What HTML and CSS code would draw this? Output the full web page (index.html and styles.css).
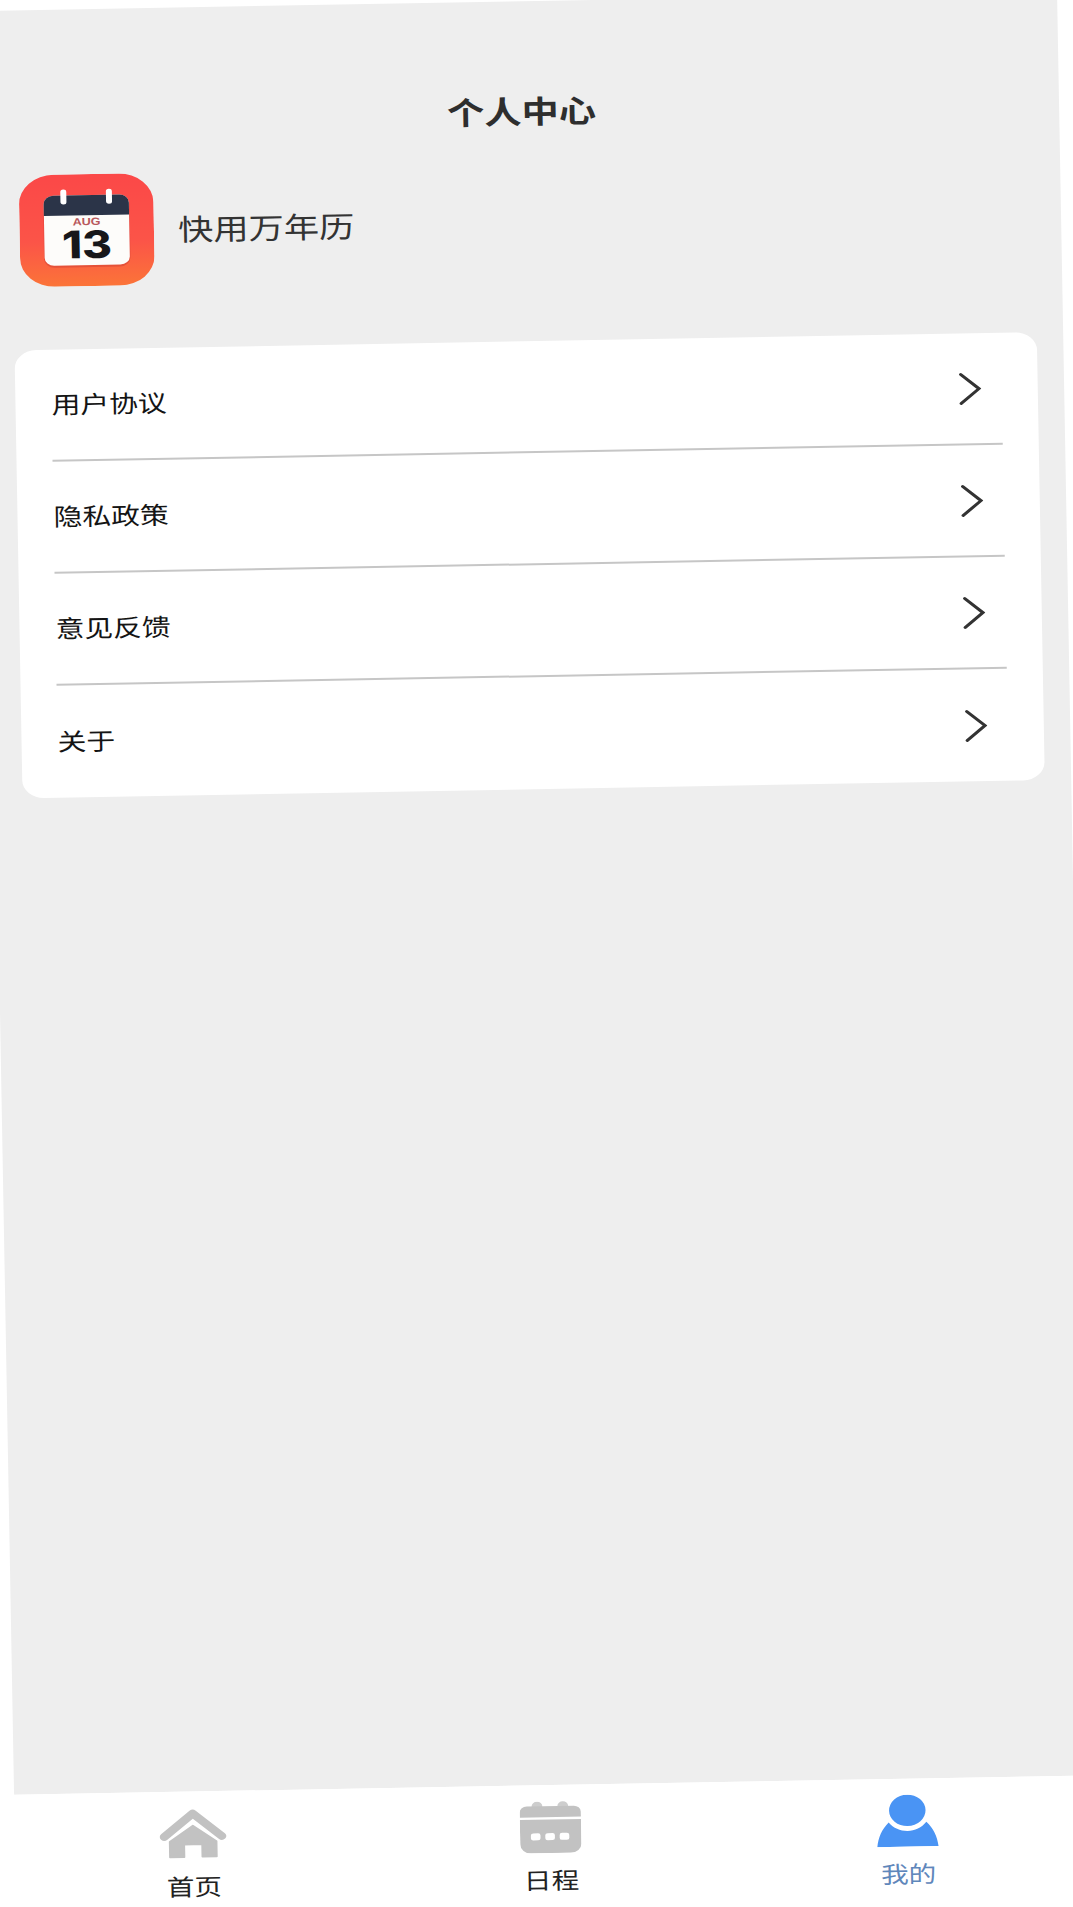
FILE: index.html
```html
<!DOCTYPE html>
<html lang="zh-CN">
<head>
<meta charset="utf-8">
<title>个人中心</title>
<link rel="stylesheet" href="styles.css">
</head>
<body>
<div class="screen">
  <main class="content">
    <h1 class="title">个人中心</h1>
    <section class="brand">
      <svg class="app-icon" viewBox="0 0 112 112">
        <defs>
          <linearGradient id="bg" x1="0" y1="0" x2="0" y2="1">
            <stop offset="0" stop-color="#fb4848"/>
            <stop offset="0.6" stop-color="#fb5448"/>
            <stop offset="1" stop-color="#fb7438"/>
          </linearGradient>
        </defs>
        <rect width="112" height="112" rx="29" fill="url(#bg)"/>
        <rect x="20" y="22" width="72" height="71" rx="9" fill="#c93a30" opacity="0.45"/>
        <rect x="20.5" y="21" width="71" height="70" rx="8" fill="#fdfcfa"/>
        <path class="cal-head" d="M20.5 41V29a8 8 0 0 1 8-8h55a8 8 0 0 1 8 8v12z"/>
        <rect x="34.500" y="15" width="5" height="15" rx="2.500" fill="#fff"/>
        <rect x="72.500" y="15" width="5" height="15" rx="2.500" fill="#fff"/>
        <text class="cal-month" x="56" y="51" text-anchor="middle">AUG</text>
        <text class="cal-day" x="56" y="84" text-anchor="middle">13</text>
      </svg>
      <span class="brand-name">快用万年历</span>
    </section>
    <ul class="menu">
      <li class="menu-row"><span class="menu-text">用户协议</span>
        <svg class="chevron" viewBox="0 0 19 33"><polyline points="2,2 17,16.5 2,31"/></svg></li>
      <li class="menu-row"><span class="menu-text">隐私政策</span>
        <svg class="chevron" viewBox="0 0 19 33"><polyline points="2,2 17,16.5 2,31"/></svg></li>
      <li class="menu-row"><span class="menu-text">意见反馈</span>
        <svg class="chevron" viewBox="0 0 19 33"><polyline points="2,2 17,16.5 2,31"/></svg></li>
      <li class="menu-row"><span class="menu-text">关于</span>
        <svg class="chevron" viewBox="0 0 19 33"><polyline points="2,2 17,16.5 2,31"/></svg></li>
    </ul>
  </main>
  <nav class="tabbar">
    <div class="tab">
      <svg class="tab-icon" viewBox="0 0 57 52">
        <polyline class="roof" points="4.500,29 28.500,6 52.500,29"/>
        <path class="house" d="M28.500 18 L48 34 V49.500 H36 V37 H21 V49.500 H9 V34 Z"/>
      </svg>
      <span class="tab-label">首页</span>
    </div>
    <div class="tab">
      <svg class="tab-icon" viewBox="0 0 51 52">
        <circle class="gray-soft" cx="14.500" cy="5" r="4.500"/>
        <circle class="gray-soft" cx="36" cy="5" r="4.500"/>
        <path class="gray" d="M0 16V11a6 6 0 0 1 6-6h39a6 6 0 0 1 6 6v5z"/>
        <path class="gray" d="M0 18.500h51V43a9 9 0 0 1-9 9H9a9 9 0 0 1-9-9z"/>
        <rect class="dot" x="9" y="32" width="8" height="7" rx="2"/>
        <rect class="dot" x="21" y="32" width="8" height="7" rx="2"/>
        <rect class="dot" x="33" y="32" width="8" height="7" rx="2"/>
      </svg>
      <span class="tab-label">日程</span>
    </div>
    <div class="tab">
      <svg class="tab-icon" viewBox="0 0 52 53">
        <ellipse class="blue" cx="26" cy="16" rx="15.500" ry="16"/>
        <path class="blue" d="M0 53C1 43 4 35 10 28C14 34 20 37 26 37C32 37 38 34 42 28C48 35 51 43 52 53Z"/>
      </svg>
      <span class="tab-label tab-label-active">我的</span>
    </div>
  </nav>
</div>
</body>
</html>
```
FILE: styles.css
```css
html, body {
  margin: 0;
  padding: 0;
  height: 1907px;
  overflow: hidden;
  background: #fff;
}
body {
  font-family: "Noto Sans CJK SC", "Noto Sans", sans-serif;
}
.screen {
  width: 896px;
  margin: 11.3px 0 0 -18px;
  transform-origin: 0 0;
  transform: rotate(-1.03deg) scale(1.2, 1);
}
.content {
  height: 1784px;
  background: #eeeeee;
  padding: 0 22px;
  box-sizing: border-box;
  display: flex;
  flex-direction: column;
}
.title {
  margin: 0;
  padding-top: 86px;
  height: 165px;
  box-sizing: border-box;
  text-align: center;
  font-size: 31px;
  line-height: 46px;
  font-weight: 700;
  color: #2e2e2e;
}
.brand {
  display: flex;
  align-items: center;
  gap: 20px;
  padding-left: 6px;
  height: 175px;
  box-sizing: border-box;
  padding-bottom: 63px;
}
.app-icon {
  width: 112px;
  height: 112px;
  flex: none;
}
.cal-head { fill: #2b3448; }
.cal-month {
  font-family: "Liberation Sans", sans-serif;
  font-weight: 700;
  font-size: 10.500px;
  fill: #b8585c;
}
.cal-day {
  font-family: "Inter", "Liberation Sans", sans-serif;
  font-weight: 800;
  font-size: 38px;
  fill: #17171a;
}
.brand-name {
  font-size: 29.400px;
  line-height: 40px;
  margin-top: -2px;
  color: #333;
}
.menu {
  list-style: none;
  margin: 0;
  padding: 0 30px;
  height: 448px;
  background: #fff;
  border-radius: 18px;
}
.menu-row {
  height: 112px;
  box-sizing: border-box;
  display: flex;
  align-items: center;
  justify-content: space-between;
  padding-right: 17px;
  border-bottom: 2px solid #c6c6c6;
  font-size: 24px;
  color: #141414;
}
.menu-row:last-child { border-bottom: 0; }
.menu-text { margin-top: -4px; }
.chevron {
  width: 19px;
  height: 33px;
  flex: none;
}
.chevron polyline {
  fill: none;
  stroke: #333;
  stroke-width: 2.800;
  stroke-linecap: round;
  stroke-linejoin: miter;
}
.tabbar {
  display: flex;
  height: 150px;
  padding-right: 3px;
  background: #fff;
}
.tab {
  flex: 1;
  display: flex;
  flex-direction: column;
  align-items: center;
  padding-top: 16px;
}
.tab-icon {
  height: 52px;
  width: auto;
}
.tab:nth-child(1) .tab-icon { width: 57px; }
.tab:nth-child(2) .tab-icon { width: 51px; }
.tab:nth-child(3) .tab-icon { width: 52px; }
.roof {
  fill: none;
  stroke: #c2c2c2;
  stroke-width: 7.500;
  stroke-linecap: round;
  stroke-linejoin: round;
}
.house {
  fill: #c2c2c2;
  stroke: #c2c2c2;
  stroke-width: 1.500;
  stroke-linejoin: round;
}
.gray { fill: #c2c2c2; }
.gray-soft { fill: #cdcdcd; }
.dot { fill: #fff; }
.blue { fill: #4a94f4; }
.tab-label {
  margin-top: 10px;
  font-size: 23px;
  line-height: 32px;
  color: #222;
}
.tab-label-active { color: #5f87bb; }
```
